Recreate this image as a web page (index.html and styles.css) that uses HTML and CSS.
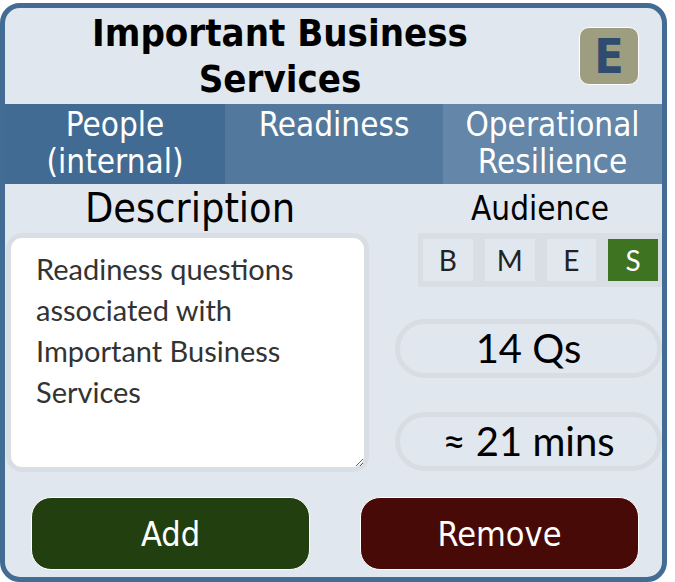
FILE: index.html
```html
<!DOCTYPE html>
<html lang="en">
<head>
  <meta charset="UTF-8">
  <title>Assessment Card</title>
  <meta name="viewport" content="width=device-width, initial-scale=1.0">
  <link rel="stylesheet" href="styles.css">
</head>
<body>

<div class="card">
  <!-- Title + level badge -->
  <div class="card-head">
    <h1 class="title">Important Business Services</h1>
    <div class="badge">E</div>
  </div>

  <!-- Category tags -->
  <div class="tabs">
    <div class="tab tab-1">People (internal)</div>
    <div class="tab tab-2">Readiness</div>
    <div class="tab tab-3">Operational Resilience</div>
  </div>

  <div class="card-body">
    <div class="col-desc">
      <h2 class="label-lg">Description</h2>
      <textarea class="desc" readonly>Readiness questions associated with Important Business Services</textarea>
    </div>

    <div class="col-meta">
      <div class="audience-group">
        <h3 class="label-sm">Audience</h3>
        <div class="audience">
          <button class="aud">B</button>
          <button class="aud">M</button>
          <button class="aud">E</button>
          <button class="aud active">S</button>
        </div>
      </div>
      <div class="pill">14 Qs</div>
      <div class="pill">&asymp; 21 mins</div>
    </div>
  </div>

  <div class="actions">
    <button class="btn btn-add">Add</button>
    <button class="btn btn-remove">Remove</button>
  </div>
</div>

</body>
</html>
```

FILE: styles.css
```css
body {
  margin: 0;
  font-family: "Lato", sans-serif;
  background: #fff;
}
.card {
  width: 667px;
  height: 579px;
  margin-top: 3px;
  box-sizing: border-box;
  border: 5px solid #436c95;
  border-radius: 20px;
  background: #e0e7ef;
  overflow: hidden;
  display: flex;
  flex-direction: column;
}
.title, .tab, .label-lg, .label-sm, .btn, .badge {
  font-family: "DejaVu Sans Condensed", "Liberation Sans", sans-serif;
}

/* header */
.card-head {
  display: flex;
  align-items: center;
  gap: 24px;
  padding: 2px 23px 2px 0;
  height: 96px;
  box-sizing: border-box;
}
.title {
  flex: 1;
  margin: 0;
  text-align: center;
  font-size: 38px;
  line-height: 46px;
  font-weight: bold;
  color: #000;
}
.badge {
  width: 60px;
  height: 58px;
  box-sizing: border-box;
  border: 1px solid #fff;
  border-radius: 10px;
  background: #9d9d7f;
  color: #2f4c6e;
  font-weight: bold;
  font-size: 48px;
  line-height: 56px;
  text-align: center;
}

/* tags */
.tabs {
  display: grid;
  grid-template-columns: 220px 218px 1fr;
  height: 80px;
}
.tab {
  color: #fff;
  font-size: 33px;
  line-height: 37px;
  text-align: center;
  padding: 2px 12px 0;
}
.tab-1 { background: #426b94; }
.tab-2 { background: #52799d; }
.tab-3 { background: #6386a9; }

/* body */
.card-body {
  display: flex;
}
.col-desc {
  width: 370px;
  display: flex;
  flex-direction: column;
}
.label-lg {
  margin: 0;
  font-weight: normal;
  font-size: 41px;
  line-height: 49px;
  text-align: center;
  color: #000;
}
.desc {
  margin-left: 1px;
  width: 363px;
  height: 239px;
  box-sizing: border-box;
  border: 5px solid #d9dee4;
  border-radius: 16px;
  background: #fff;
  padding: 10px 16px 0 25px;
  font-family: "Lato", sans-serif;
  font-size: 29px;
  line-height: 41px;
  color: #333;
  overflow: hidden;
  outline: none;
}
.col-meta {
  flex: 1;
  display: flex;
  flex-direction: column;
  align-items: flex-end;
}
.audience-group {
  width: 244px;
}
.label-sm {
  margin: 0;
  font-weight: normal;
  font-size: 33px;
  line-height: 49px;
  text-align: center;
  color: #000;
}
.audience {
  display: flex;
  gap: 12px;
  padding: 6px 4px 6px 5px;
  background: #d9dee5;
}
.aud {
  width: 50px;
  height: 42px;
  border: none;
  padding: 0;
  background: #e0e7ef;
  font-family: "Lato", sans-serif;
  font-size: 28px;
  color: #222;
}
.aud.active {
  background: #3e7421;
  color: #fff;
}
.pill {
  width: 267px;
  height: 59px;
  box-sizing: border-box;
  margin-top: 32px;
  border: 5px solid #d8dde3;
  border-radius: 30px;
  font-size: 40px;
  line-height: 49px;
  text-align: center;
  color: #000;
}
.pill + .pill {
  margin-top: 34px;
}

/* buttons */
.actions {
  display: flex;
  gap: 50px;
  padding-left: 26px;
  margin-top: 25px;
}
.btn {
  width: 279px;
  height: 73px;
  border: 1.5px solid #fff;
  border-radius: 20px;
  color: #fff;
  font-size: 34px;
  cursor: pointer;
}
.btn-add { background: #22400f; }
.btn-remove { background: #480a06; }
```
